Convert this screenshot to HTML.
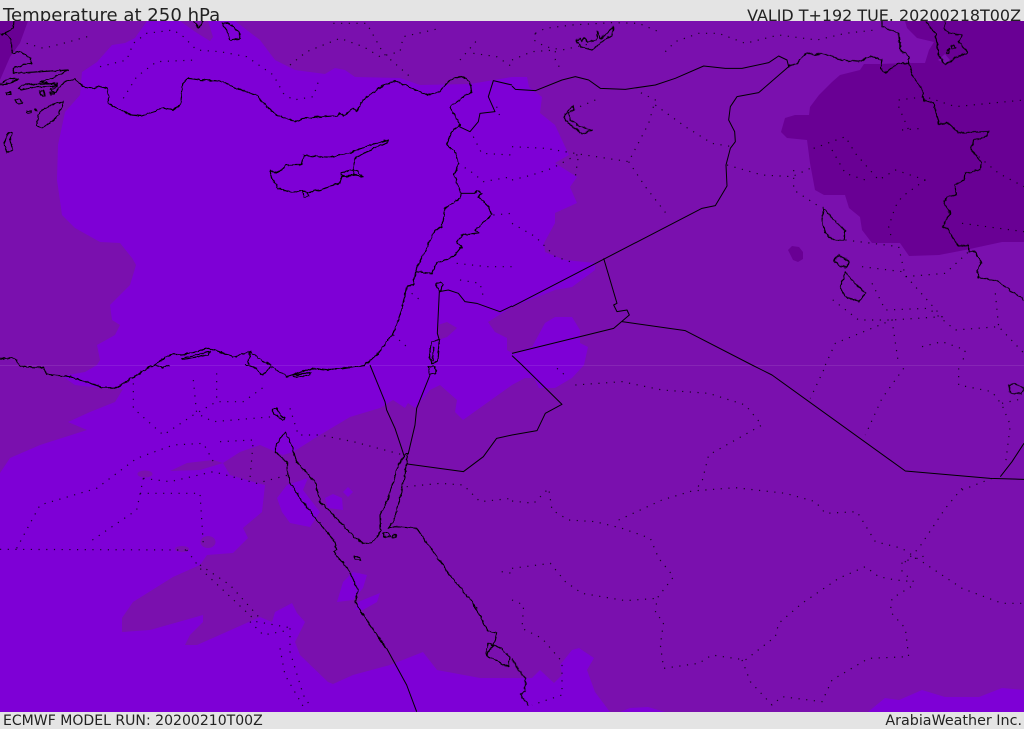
<!DOCTYPE html>
<html><head><meta charset="utf-8"><title>Temperature at 250 hPa</title>
<style>
html,body{margin:0;padding:0;background:#e4e4e4}
#w{position:relative;width:1024px;height:729px;overflow:hidden;background:#e4e4e4;font-family:"DejaVu Sans","Liberation Sans",sans-serif;color:#222}
.t{position:absolute;white-space:nowrap;line-height:1}
svg{position:absolute;left:0;top:0}
svg .c path,svg .s path{fill:none;stroke:#000;stroke-width:1.15;vector-effect:non-scaling-stroke;stroke-linejoin:round}
svg .s path{stroke-width:1}
svg .d path{fill:none;stroke:#000;stroke-width:1.2;stroke-dasharray:1.2 6.5;opacity:.8;vector-effect:non-scaling-stroke}
</style></head><body><div id="w">
<div class="t" style="left:3px;top:7px;font-size:18.1px">Temperature at 250 hPa</div>
<div class="t" style="right:3px;top:8px;font-size:15.95px">VALID T+192 TUE. 20200218T00Z</div>
<div class="t" style="left:3px;top:713.5px;font-size:14.05px">ECMWF MODEL RUN: 20200210T00Z</div>
<div class="t" style="right:2px;top:714px;font-size:14.3px">ArabiaWeather Inc.</div>
<svg width="1024" height="729" viewBox="0 0 1024 729">
<defs><clipPath id="m"><rect x="0" y="21" width="1024" height="691"/></clipPath>
<filter id="r" filterUnits="userSpaceOnUse" x="0" y="0" width="1024" height="729" color-interpolation-filters="sRGB"><feTurbulence type="fractalNoise" baseFrequency=".22" numOctaves="2" seed="4" result="n"/><feDisplacementMap in="SourceGraphic" in2="n" scale="3.2" xChannelSelector="R" yChannelSelector="G"/></filter></defs>
<g clip-path="url(#m)">
<rect x="0" y="21" width="1024" height="691" fill="#7e00d6"/>
<g fill="#7a10ae">
<path d="M235,21 260,40 275,60 295,70 325,74 335,68 345,70 355,77 400,78 420,85 470,84 512,77 527,77 529,87 542,97 540,113 555,125 569,155 555,163 577,177 570,187 577,203 555,213 555,223 544,243 545,252 565,260 595,263 595,270 572,287 555,290 512,307 488,322 495,332 507,338 507,350 512,353 532,347 545,323 555,317 572,317 580,330 580,343 588,347 584,365 572,378 555,388 539,388 534,378 525,378 512,385 463,420 455,412 457,400 440,385 430,390 415,408 408,403 405,408 393,400 380,408 350,417 320,435 293,452 283,455 260,445 240,452 223,463 230,475 257,483 265,485 262,512 243,528 248,538 233,553 207,555 200,565 173,577 133,602 122,618 122,632 150,630 203,615 203,622 190,635 185,645 197,645 260,617 272,622 275,612 292,603 297,613 305,622 295,642 300,655 328,682 333,684 353,675 390,665 423,652 437,670 480,678 532,678 540,670 554,683 562,675 560,665 572,650 579,648 594,658 587,670 595,692 610,712 620,712 630,708 648,707 665,712 868,712 885,698 899,700 922,690 945,697 979,697 1002,688 1024,690 1024,21Z"/>
<path d="M0,21 147,21 135,38 125,43 112,45 97,62 82,72 80,95 65,112 58,145 57,180 62,215 75,228 100,242 120,243 132,258 136,265 130,285 110,305 112,320 120,325 115,335 97,345 100,360 97,365 85,372 62,376 75,385 100,388 123,389 115,402 90,412 68,422 87,430 40,445 10,458 0,473Z"/>
<path d="M180,21 197,33 210,41 213,37 208,21Z"/>
<path d="M170,471 187,463 213,460 223,463 200,470Z"/>
<ellipse cx="145" cy="474" rx="7.5" ry="3.5"/>
<ellipse cx="208" cy="542" rx="7.5" ry="6"/>
<ellipse cx="182" cy="549" rx="7" ry="3"/>
<path d="M438,325 447,322 457,328 447,337 438,340Z"/>
</g>
<g fill="#7e00d6">
<path d="M277,498 287,485 308,478 303,490 320,512 310,527 290,523 282,512Z"/>
<path d="M325,498 333,494 342,498 343,510 328,508Z"/>
<path d="M343,492 348,487 353,492 348,497Z"/>
<path d="M337,602 343,582 353,572 367,575 363,588 353,600Z"/>
<path d="M355,610 358,602 380,593 377,602 363,610Z"/>
</g>
<g fill="#690094">
<path d="M905,21 907,28 917,38 934,42 929,50 925,63 909,63 879,64 864,64 860,70 840,75 832,82 819,95 810,107 809,115 795,115 785,118 781,132 787,138 807,140 810,163 815,190 824,195 845,195 849,208 860,217 862,230 872,243 900,243 909,256 939,255 965,250 1002,242 1024,242 1024,21Z"/>
<path d="M788,250 792,246 799,247 803,252 803,259 798,262 793,260Z"/>
<path d="M0,21 28,21 20,43 10,57 0,80Z"/>
</g>
<path d="M938,60 945,54 950,60 946,65Z" fill="#7a10ae"/>
<rect x="0" y="365" width="1024" height="1" fill="#fff" opacity=".09"/>

<g class="d">
<g transform="scale(.33333)">
<path d="M80,130 130,145 190,130 280,105"/><path d="M300,200 380,180 400,130 440,100 520,90 550,110 590,150 660,155 740,170 820,225 850,280 880,300 940,290 960,230"/><path d="M370,295 410,230 470,185 590,180"/><path d="M870,195 920,155 1020,115 1090,140 1140,170 1200,155 1210,110 1320,85"/><path d="M1000,70 1100,70 1150,160 1230,230"/><path d="M1380,180 1440,110"/><path d="M1420,160 1490,170 1536,200"/><path d="M1490,320 1500,350"/><path d="M1420,410 1445,460 1536,465"/><path d="M1375,490 1420,520 1450,545 1536,530"/><path d="M1480,645 1536,640"/><path d="M1370,790 1460,800 1536,800"/><path d="M1380,840 1440,850 1450,890"/><path d="M1235,880 1260,900"/><path d="M1180,1005 1220,1040"/>
</g>
<g transform="translate(512,0) scale(.33333)">
<path d="M70,100 100,85 180,75 300,68 380,70 440,95"/><path d="M70,100 65,120 100,140 150,150 240,130"/><path d="M0,180 60,155 130,150 130,180 150,215"/><path d="M460,155 490,125 560,100 620,100 700,130 800,105 915,120 1000,100 1090,90"/><path d="M250,300 180,330"/><path d="M0,440 100,445 200,462 350,485 410,370 430,300 380,275"/><path d="M430,315 520,380 600,430 660,440"/><path d="M350,485 400,560 470,650"/><path d="M0,540 60,525 120,505 200,462 190,530"/><path d="M0,670 70,710 130,770 190,790"/><path d="M645,495 750,525 840,530 895,505"/><path d="M845,510 845,570 930,625"/><path d="M905,445 1000,410 1030,460 1100,540 1150,510 1240,540"/><path d="M960,450 1000,520 1060,540"/><path d="M1240,540 1170,590 1150,620 1130,680 1140,720"/><path d="M1160,300 1240,290 1330,320 1536,300"/><path d="M1170,390 1230,385"/><path d="M1160,320 1190,390"/><path d="M1400,470 1460,520 1536,560"/><path d="M1350,670 1536,695"/><path d="M1000,720 1160,740 1180,830 1300,820 1370,755"/><path d="M1050,800 1170,815 1290,950 1140,960 1040,960 950,890"/><path d="M1080,850 1120,930 1250,925 1330,990 1460,980 1536,1060"/><path d="M940,1095 970,1030 1140,960 1160,1095"/><path d="M1230,1040 1290,1025 1360,1050 1350,1095"/><path d="M1450,880 1460,980"/>
</g>
<g transform="translate(0,365) scale(.33333)">
<path d="M400,55 400,130 490,210 580,150 650,110 730,110 800,60"/><path d="M580,45 590,145 640,170 700,165 820,155"/><path d="M650,25 650,110"/><path d="M50,550 120,420 290,370 410,280 520,240 610,235 640,290"/><path d="M660,230 760,225 750,340"/><path d="M430,340 510,350 640,320 770,355 865,330"/><path d="M430,340 410,435 270,530"/><path d="M420,385 600,385 610,540"/><path d="M0,553 560,555"/><path d="M560,555 600,610 770,770 880,790"/><path d="M600,600 690,660 780,760"/><path d="M870,130 895,210 960,210 1060,230 1210,270"/><path d="M750,770 790,810 870,795"/><path d="M870,790 870,860 910,990 935,1030"/><path d="M840,850 855,930 910,1025"/><path d="M1220,365 1320,355 1390,360 1440,410 1536,400"/><path d="M1505,620 1536,625"/>
</g>
<g transform="translate(512,365) scale(.33333)">
<path d="M135,10 170,40"/><path d="M190,60 330,50 450,75 590,85 700,120 750,180 590,270 570,350 550,375"/><path d="M0,408 65,415 110,370 120,435 170,465 250,470 330,490 415,520 440,580 485,635 435,700 430,745 455,770 445,840 455,910 560,895 600,870 700,885 790,815 800,775 870,715 980,640 1060,605 1100,635 1150,645 1205,650 1170,620 1170,590 1250,570"/><path d="M320,465 450,405 540,378 670,368 820,385 910,410 940,445 1035,440 1090,530 1170,550 1260,610 1350,670 1470,715 1536,715"/><path d="M0,610 115,595 160,650 210,685 340,707 435,700"/><path d="M0,705 35,720 30,790 90,820 150,890 150,990 60,1020"/><path d="M690,885 715,950 780,1020 810,995 930,1010 960,945 1070,880 1190,875 1180,790 1135,740 1140,700 1205,660"/><path d="M1350,370 1300,430 1220,550 1170,600"/><path d="M1350,375 1440,340"/><path d="M1175,10 1110,100 1060,210"/><path d="M935,15 895,100"/><path d="M1340,10 1340,60 1440,80 1470,120 1495,180 1480,300"/><path d="M1470,115 1536,100"/>
</g>
</g>

<g class="s">
<g transform="scale(.33333)">
<path d="M1536,255 1480,242 1465,290 1485,335 1440,340 1435,365 1410,395 1378,380"/>
<path d="M1318,875 1345,870 1375,880 1395,905 1430,910 1500,935 1536,918"/>
<path d="M1318,875 1312,1000 1318,1020"/>
<path d="M1382,580 1425,580"/>
</g>
<g transform="translate(512,0) scale(.33333)">
<path d="M0,920 570,625 610,617 645,558 642,495 655,445 670,425 668,395 650,360 655,320 675,290 740,278 830,200 825,180 800,168 770,188 690,205 640,205 575,198 490,235 430,255 340,268 265,265 230,240 190,230 150,240 70,272 10,268 0,258"/>
<path d="M275,775 315,910 305,915 315,935 345,930 352,945 305,985 0,1060"/>
<path d="M330,965 520,992 720,1095"/>
<path d="M0,1067 30,1095"/>
</g>
<g transform="translate(0,365) scale(.33333)">
<path d="M1110,0 1155,110 1160,135 1185,190 1205,250 1212,272"/>
<path d="M1290,30 1250,130 1245,180 1225,265"/>
<path d="M1222,297 1390,320 1450,275 1490,220 1536,210"/>
<path d="M1160,850 1220,960 1250,1040"/>
</g>
<g transform="translate(512,365) scale(.33333)">
<path d="M30,0 150,118 100,145 75,197 0,210"/>
<path d="M720,0 780,30 1180,318 1435,340 1536,343"/>
<path d="M1465,335 1500,290 1536,235"/>
</g>
</g>

<g class="c" filter="url(#r)">
<g transform="scale(.33333)">
<path d="M190,248 205,240 225,238 240,250 250,262 280,265 295,258 320,265 325,285 325,310 360,330 395,345 425,348 460,335 490,323 520,330 540,315 545,290 548,250 565,235 600,240 660,243 710,265 770,285 800,320 830,345 885,365 910,355 1010,347 1020,340 1030,348 1060,325 1070,335 1090,300 1150,255 1185,243 1215,255 1283,285 1320,275 1330,262 1350,240 1385,228 1410,245 1415,275 1385,295 1350,320 1380,375 1355,395 1340,435 1365,455 1375,490 1362,525 1382,578 1380,595 1335,625 1325,680 1305,692 1245,815 1240,855 1220,858 1205,930 1180,1000 1130,1065 1095,1095"/>
<path d="M1425,580 1430,572 1445,580 1435,590 1465,620 1475,645 1425,690 1440,700 1385,705 1370,725 1385,740 1360,770 1310,790 1295,820 1245,815"/>
<path d="M1318,875 1308,862 1310,850 1320,847 1328,855 1325,870Z"/>
<path d="M1295,1025 1318,1020 1312,1085 1295,1090 1288,1060Z"/><path d="M1300,1040 1298,1085"/>
<path d="M810,510 825,520 845,510 855,495 905,495 912,465 990,472 1050,458 1110,435 1165,420 1160,428 1100,455 1065,475 1060,505 1090,530 1055,525 1025,530 1020,548 960,570 925,575 900,572 875,578 835,565 815,535Z"/>
<path d="M1025,518 1060,510 1062,525 1040,530 1025,525Z"/><path d="M908,576 925,575 925,590 912,590Z"/>
<path d="M0,100 15,100 35,120 35,160 60,155 92,175 95,190 70,195 40,205 40,220 70,218 205,210 175,225 160,235 120,245 150,250 170,248 170,262 150,268 165,280 190,248"/>
<path d="M42,60 40,85 5,105"/><path d="M0,250 30,235 55,238 25,250 0,255"/>
<path d="M56,265 65,255 95,252 160,250 170,258 100,262 65,270Z"/>
<path d="M190,305 150,315 120,335 108,375 125,385 155,365 175,345Z"/>
<path d="M25,400 35,398 30,420 38,450 20,458 12,430Z"/>
<path d="M118,275 132,270 135,288 122,285Z"/><path d="M18,278 30,275 32,283 20,284Z"/><path d="M45,298 60,298 68,310 50,310Z"/><path d="M80,332 95,332 93,338 80,338Z"/><path d="M105,328 111,328 111,332 105,332Z"/><path d="M150,278 162,278 162,283 150,283Z"/>
<path d="M665,70 685,68 715,95 722,115 690,122 680,90Z"/><path d="M580,63 595,85 610,63"/>
<path d="M460,1095 515,1062 545,1065 625,1045 700,1070 750,1055 790,1085 815,1095"/>
<path d="M545,1075 630,1055 625,1065 550,1078Z"/><path d="M750,1055 745,1095"/>
</g>
<g transform="translate(512,0) scale(.33333)">
<path d="M828,200 855,192 882,158 905,165 930,160 990,180 1040,185 1075,168 1110,180 1105,205 1120,218 1160,190 1190,190 1205,235 1230,265 1235,300 1265,310 1280,370 1310,370 1340,398 1430,395 1425,408 1385,420 1378,450 1408,485 1405,510 1360,520 1355,540 1330,555 1335,585 1305,590 1295,610 1315,640 1290,680 1305,685 1340,738 1370,735 1370,755 1390,755 1408,790 1395,815 1400,835 1450,840 1536,900"/>
<path d="M1110,63 1110,80 1160,100 1165,150 1190,170 1190,190"/>
<path d="M1240,63 1270,100 1280,165 1300,195 1325,175 1368,158 1340,125 1350,105 1310,100 1295,85 1300,65"/>
<path d="M1315,140 1325,135 1332,143 1320,146Z"/><path d="M1305,150 1312,148 1310,160 1304,160Z"/>
<path d="M192,122 205,115 210,125 218,113 225,125 255,120 255,95 265,115 280,105 305,80 300,105 280,118 240,150 205,140Z"/>
<path d="M182,318 185,330 170,340 175,360 205,380 240,390 210,402 175,375 155,350 180,320Z"/>
<path d="M935,625 930,660 940,700 965,720 995,720 1000,690 970,665Z"/>
<path d="M965,780 980,765 1012,785 1005,802 985,800Z"/>
<path d="M1000,815 985,860 1000,890 1040,905 1060,880 1020,840Z"/>
</g>
<g transform="translate(0,365) scale(.33333)">
<path d="M0,-20 45,-20 60,5 130,8 140,28 210,35 310,68 350,68 450,5 465,0"/>
<path d="M465,0 490,8 510,0"/>
<path d="M735,0 770,10 785,30 815,5 860,35 940,10 990,15 1095,0"/>
<path d="M880,30 935,22 925,32 880,36Z"/>
<path d="M1285,5 1300,3 1310,15 1305,28 1290,28Z"/>
<path d="M1225,265 1215,270 1195,300 1180,350 1160,410 1140,450 1142,500 1115,535 1090,535 1060,515 1000,450 960,410 945,350 890,290 875,240 855,200 825,245 825,260 860,290 868,350 900,400 950,465 1005,530 1010,555 1000,560 1050,620 1075,680 1065,710 1110,780 1160,850"/>
<path d="M1225,265 1215,330 1195,420 1180,470 1165,490 1185,485 1250,490 1300,560 1350,630 1420,715 1465,798 1490,805 1485,830 1460,870"/>
<path d="M815,135 830,130 845,155 855,158 850,165 825,150Z"/>
<path d="M1150,505 1165,503 1172,515 1152,515Z"/><path d="M1178,510 1187,510 1187,517 1178,517Z"/><path d="M1062,575 1078,575 1082,588 1065,582Z"/>
<path d="M1465,835 1495,845 1530,875 1525,905 1465,875 1458,865Z"/>
</g>
<g transform="translate(512,365) scale(.33333)">
<path d="M0,880 10,900 40,940 40,980 25,990 50,1020"/>
<path d="M1490,60 1510,55 1536,70 1530,85 1495,85Z"/>
</g>
</g>
</g>
</svg>
</div></body></html>
